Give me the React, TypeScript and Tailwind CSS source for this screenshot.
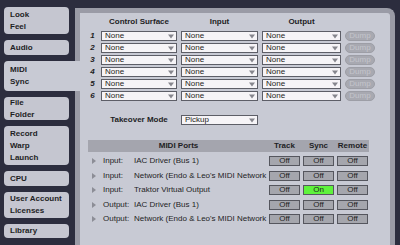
import React from "react";

const font = { fontFamily: '"Liberation Sans", Arial, sans-serif' };

const tabs = [
  { lines: ["Look", "Feel"], h: "h-[27px]" },
  { lines: ["Audio"], h: "h-[15px]" },
  { lines: ["MIDI", "Sync"], h: "h-[30px]", active: true },
  { lines: ["File", "Folder"], h: "h-[23px]" },
  { lines: ["Record", "Warp", "Launch"], h: "h-[39px]" },
  { lines: ["CPU"], h: "h-[15px]" },
  { lines: ["User Account", "Licenses"], h: "h-[26px]" },
  { lines: ["Library"], h: "h-[14px]" },
];

const ports = [
  { dir: "Input:", name: "IAC Driver (Bus 1)", sync: false },
  { dir: "Input:", name: "Network (Endo & Leo's MIDI Network", sync: false },
  { dir: "Input:", name: "Traktor Virtual Output", sync: true },
  { dir: "Output:", name: "IAC Driver (Bus 1)", sync: false },
  { dir: "Output:", name: "Network (Endo & Leo's MIDI Network", sync: false },
];

const Select = ({ value, w }: { value: string; w: string }) => (
  <div
    className={`${w} h-[10px] shrink-0 flex items-center justify-between bg-[#f6f4f7] border border-[#5d5e67] pl-[3px] pr-[2px] text-[8px] leading-[8px] text-[#1e1e22]`}
  >
    <span>{value}</span>
    <svg width="6" height="5" viewBox="0 0 6 5">
      <polygon points="0,0.5 6,0.5 3,4.5" fill="#86868d" />
    </svg>
  </div>
);

const Toggle = ({ on }: { on?: boolean }) => (
  <div
    className={`w-[31px] h-[10px] shrink-0 flex items-center justify-center border border-[#55565e] text-[8px] leading-[8px] text-[#222] ${
      on ? "bg-[#5ef23c]" : "bg-[#a5a6ad]"
    }`}
  >
    {on ? "On" : "Off"}
  </div>
);

export default function App() {
  return (
    <div
      className="w-[400px] h-[245px] overflow-hidden bg-[#2c2d3e] flex text-[#1e1e24]"
      style={font}
    >
      <div className="w-[75px] shrink-0 pt-[7px] pl-[4px] flex flex-col gap-[6px]">
        {tabs.map((t) => (
          <div
            key={t.lines[0]}
            className={`${t.h} ${
              t.active ? "w-[76px] rounded-l-[4px] relative z-10 bg-[#c8cad4]" : "w-[65px] rounded-[4px] bg-[#c5c6d0]"
            } shrink-0 flex flex-col justify-center pl-[6px] text-[8px] font-bold leading-[12px] whitespace-nowrap`}
          >
            {t.lines.map((l) => (
              <span key={l}>{l}</span>
            ))}
          </div>
        ))}
      </div>

      <div className="w-[320px] h-[237px] mt-[8px] shrink-0 border-[5px] border-b-0 border-[#9a9ba6] rounded-tr-[8px] bg-[#c8cad4] pl-[8px] pt-[3px]">
        {/* header */}
        <div className="flex gap-[4px] h-[12px] items-center text-[8px] font-bold">
          <div className="w-[9px]" />
          <div className="w-[76px] text-center">Control Surface</div>
          <div className="w-[77px] text-center">Input</div>
          <div className="w-[79px] text-center">Output</div>
        </div>

        <div className="mt-[3px] flex flex-col gap-[2px]">
          {[1, 2, 3, 4, 5, 6].map((n) => (
            <div key={n} className="flex gap-[4px] items-center h-[10px]">
              <div className="w-[9px] text-[8px] font-bold italic text-center">{n}</div>
              <Select value="None" w="w-[76px]" />
              <Select value="None" w="w-[77px]" />
              <Select value="None" w="w-[79px]" />
              <div className="w-[30px] h-[10px] rounded-full bg-[#a8a9b1] border border-[#9d9ea6] flex items-center justify-center text-[8px] leading-[8px] text-[#c4c5cc]">
                Dump
              </div>
            </div>
          ))}
        </div>

        <div className="mt-[14px] flex gap-[4px] items-center h-[10px]">
          <div className="w-[9px]" />
          <div className="w-[76px] text-center text-[8px] font-bold whitespace-nowrap">Takeover Mode</div>
          <Select value="Pickup" w="w-[77px]" />
        </div>

        <div className="mt-[15px] w-[281px]">
          <div className="h-[12px] bg-[#a4a5ae] flex items-center text-[8px] font-bold">
            <div className="w-[181px] text-center">MIDI Ports</div>
            <div className="flex gap-[3px]">
              <div className="w-[31px] text-center">Track</div>
              <div className="w-[31px] text-center">Sync</div>
              <div className="w-[31px] text-center">Remote</div>
            </div>
          </div>
          <div className="mt-[2px]">
            {ports.map((p, i) => (
              <div key={i} className="h-[14.5px] flex items-center text-[8px] leading-[10px]">
                <div className="w-[15px] pl-[4px] flex items-center">
                  <svg width="4" height="6" viewBox="0 0 4 6">
                    <polygon points="0,0 4,3 0,6" fill="#8c8d96" />
                  </svg>
                </div>
                <div className="w-[31px]">{p.dir}</div>
                <div className="w-[133px] mr-[2px] overflow-hidden whitespace-nowrap">{p.name}</div>
                <div className="flex gap-[3px]">
                  <Toggle />
                  <Toggle on={p.sync} />
                  <Toggle />
                </div>
              </div>
            ))}
          </div>
        </div>
      </div>
    </div>
  );
}
